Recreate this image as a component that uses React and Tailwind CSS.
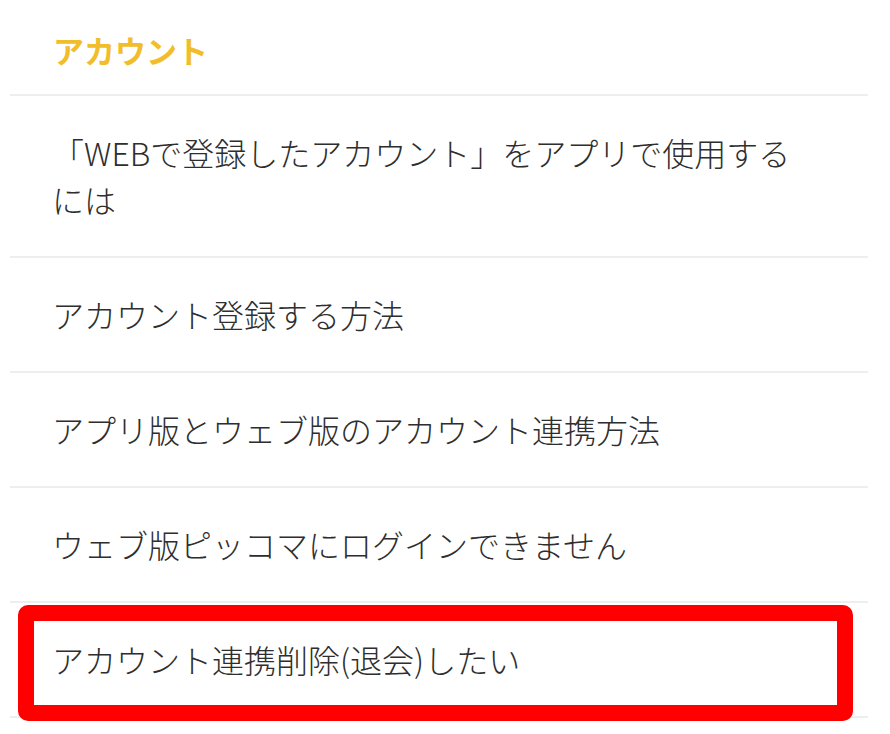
export default function App() {
  const items = [
    ["「WEBで登録したアカウント」をアプリで使用する", "には"],
    ["アカウント登録する方法"],
    ["アプリ版とウェブ版のアカウント連携方法"],
    ["ウェブ版ピッコマにログインできません"],
  ];
  return (
    <div
      className="w-[890px] h-[734px] bg-white overflow-hidden"
      style={{ fontFamily: '"Noto Sans CJK JP", "Noto Sans", sans-serif' }}
    >
      <div className="ml-[10px] w-[858px]">
        <div className="h-[96px] flex items-center pl-[43px] pt-[4px] border-b-2 border-[#eeeeee]">
          <span className="text-[31px] font-bold text-[#f2bd2a] leading-none">アカウント</span>
        </div>
        {items.map((lines, i) => (
          <div
            key={i}
            className="py-[33px] pl-[42px] pr-4 border-b-2 border-[#eeeeee] text-[32px] leading-[47px] font-light text-[#2e2e2e]"
          >
            {lines.map((l, j) => (
              <div key={j}>{l}</div>
            ))}
          </div>
        ))}
        <div className="relative py-[33px] pl-[42px] pr-4 border-b-2 border-[#eeeeee] text-[32px] leading-[47px] font-light text-[#2e2e2e]">
          <div>アカウント連携削除(退会)したい</div>
          <div className="absolute left-[8px] right-[15px] top-[2px] bottom-[-5px] border-[16px] border-[#ff0000] rounded-[10px]" />
        </div>
      </div>
    </div>
  );
}
